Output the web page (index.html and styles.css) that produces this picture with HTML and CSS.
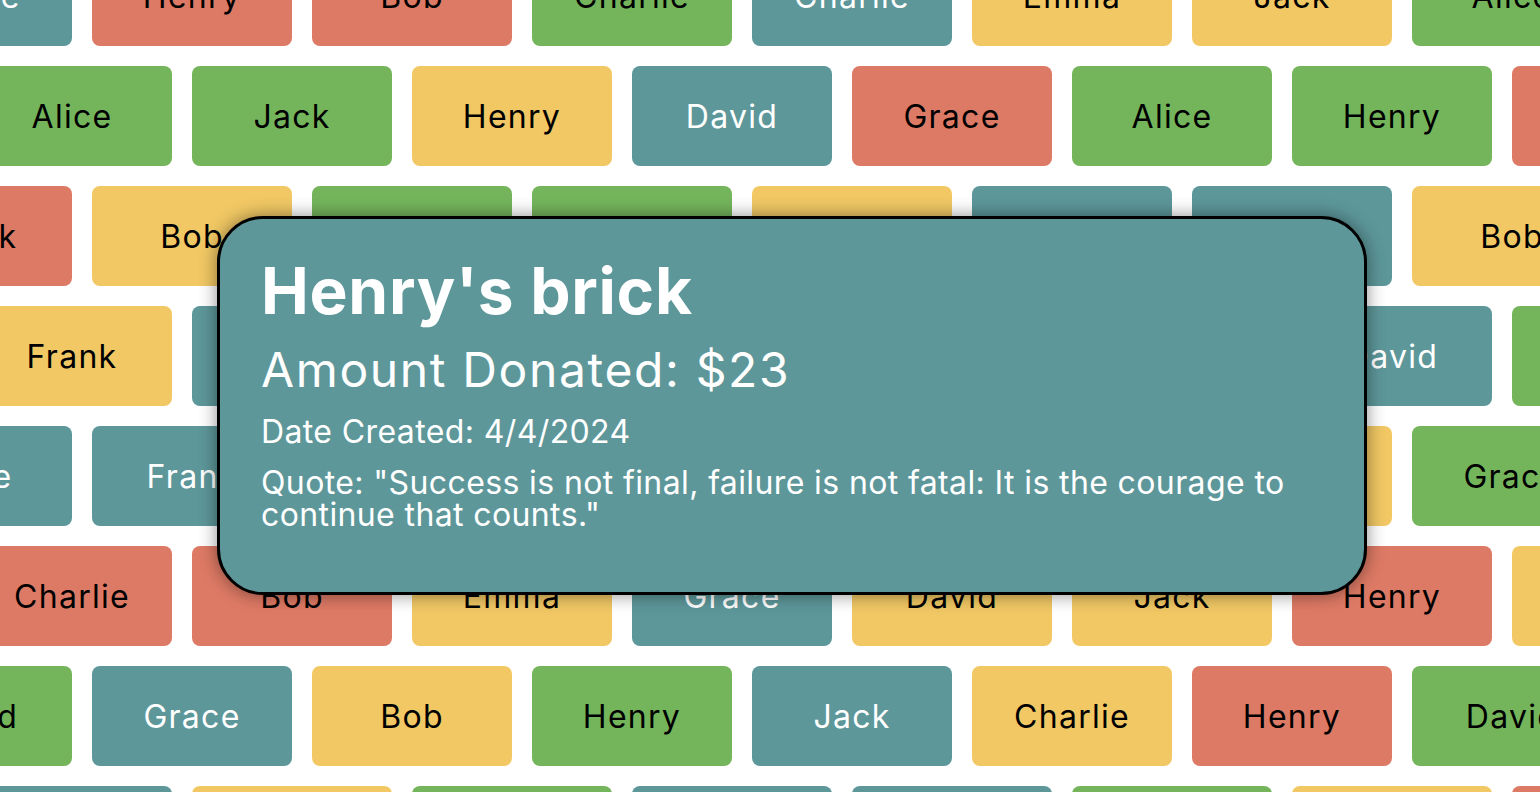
FILE: index.html
```html
<!DOCTYPE html>
<html lang="en">
<head>
<meta charset="utf-8">
<title>Brick Wall</title>
<link rel="stylesheet" href="styles.css">
</head>
<body>
<main class="wall">
  <div class="row">
    <div class="brick teal">Grace</div>
    <div class="brick red">Henry</div>
    <div class="brick red">Bob</div>
    <div class="brick green">Charlie</div>
    <div class="brick teal">Charlie</div>
    <div class="brick yellow">Emma</div>
    <div class="brick yellow">Jack</div>
    <div class="brick green">Alice</div>
  </div>
  <div class="row shift">
    <div class="brick green">Alice</div>
    <div class="brick green">Jack</div>
    <div class="brick yellow">Henry</div>
    <div class="brick teal">David</div>
    <div class="brick red">Grace</div>
    <div class="brick green">Alice</div>
    <div class="brick green">Henry</div>
    <div class="brick red"></div>
  </div>
  <div class="row">
    <div class="brick red">Frank</div>
    <div class="brick yellow">Bob</div>
    <div class="brick green"></div>
    <div class="brick green"></div>
    <div class="brick yellow"></div>
    <div class="brick teal"></div>
    <div class="brick teal"></div>
    <div class="brick yellow">Bob</div>
  </div>
  <div class="row shift">
    <div class="brick yellow">Frank</div>
    <div class="brick teal"></div>
    <div class="brick red"></div>
    <div class="brick green"></div>
    <div class="brick yellow"></div>
    <div class="brick red"></div>
    <div class="brick teal">David</div>
    <div class="brick green"></div>
  </div>
  <div class="row">
    <div class="brick teal">Alice</div>
    <div class="brick teal">Frank</div>
    <div class="brick green"></div>
    <div class="brick red"></div>
    <div class="brick yellow"></div>
    <div class="brick teal"></div>
    <div class="brick yellow"></div>
    <div class="brick green">Grace</div>
  </div>
  <div class="row shift">
    <div class="brick red">Charlie</div>
    <div class="brick red">Bob</div>
    <div class="brick yellow">Emma</div>
    <div class="brick teal">Grace</div>
    <div class="brick yellow">David</div>
    <div class="brick yellow">Jack</div>
    <div class="brick red">Henry</div>
    <div class="brick yellow"></div>
  </div>
  <div class="row">
    <div class="brick green">David</div>
    <div class="brick teal">Grace</div>
    <div class="brick yellow">Bob</div>
    <div class="brick green">Henry</div>
    <div class="brick teal">Jack</div>
    <div class="brick yellow">Charlie</div>
    <div class="brick red">Henry</div>
    <div class="brick green">David</div>
  </div>
  <div class="row shift">
    <div class="brick teal"></div>
    <div class="brick yellow"></div>
    <div class="brick green"></div>
    <div class="brick teal"></div>
    <div class="brick teal"></div>
    <div class="brick green"></div>
    <div class="brick yellow"></div>
    <div class="brick red"></div>
  </div>
</main>

<section class="tooltip">
  <h2 class="tip-title">Henry's brick</h2>
  <p class="tip-amount">Amount Donated: $23</p>
  <p class="tip-date">Date Created: 4/4/2024</p>
  <p class="tip-quote">Quote: "Success is not final, failure is not fatal: It is the courage to continue that counts."</p>
</section>
</body>
</html>
```

FILE: styles.css
```css
html, body {
  margin: 0;
  padding: 0;
  background: #ffffff;
  overflow: hidden;
  width: 1540px;
  height: 792px;
}

body {
  font-family: Inter, "Noto Sans", "DejaVu Sans", sans-serif;
  position: relative;
}

.wall {
  display: flex;
  flex-direction: column;
  gap: 20px;
  margin-top: -54px;
  margin-left: -128px;
}

.row {
  display: flex;
  gap: 20px;
  flex-wrap: nowrap;
}

.row.shift {
  padding-left: 100px;
}

.brick {
  flex: 0 0 200px;
  height: 100px;
  border-radius: 8px;
  display: flex;
  align-items: center;
  justify-content: center;
  font-size: 32px;
  letter-spacing: 0.04em;
  color: #000000;
  white-space: nowrap;
  overflow: hidden;
}

.teal { background: #5d979a; color: #ffffff; }
.red { background: #dd7a65; }
.green { background: #74b55c; }
.yellow { background: #f1c864; }

.tooltip {
  position: absolute;
  left: 217px;
  top: 216px;
  width: 1150px;
  height: 379px;
  box-sizing: border-box;
  border: 3px solid #000000;
  border-radius: 46px;
  background: #5d979a;
  color: #ffffff;
  padding: 40px 40px 40px 41px;
  box-shadow: 0 0 18px rgba(0, 0, 0, 0.45);
}

.tip-title {
  margin: 0;
  font-size: 64px;
  line-height: 64px;
  font-weight: 700;
  letter-spacing: 0.011em;
}

.tip-amount {
  margin: 23px 0 0;
  font-size: 48px;
  line-height: 48px;
  font-weight: 400;
  letter-spacing: 0.034em;
}

.tip-date {
  margin: 22px 0 0;
  font-size: 32px;
  line-height: 32px;
  letter-spacing: 0.012em;
}

.tip-quote {
  margin: 19px 0 0;
  font-size: 32px;
  line-height: 32px;
  letter-spacing: 0.012em;
}
```
